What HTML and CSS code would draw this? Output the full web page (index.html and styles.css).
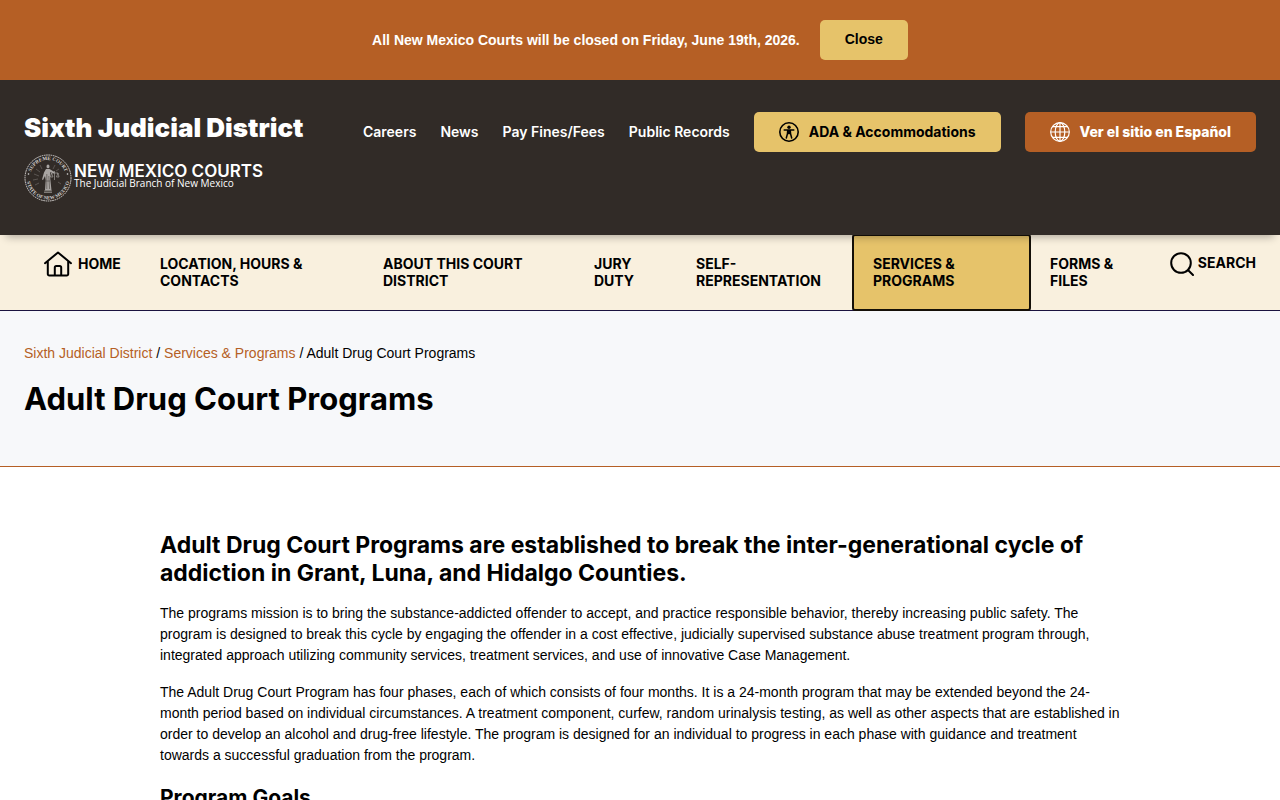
FILE: index.html
```html
<!DOCTYPE html>
<html lang="en">
<head>
  <meta charset="UTF-8" />
  <title>Adult Drug Court Programs | Sixth Judicial District</title>
  <meta name="viewport" content="width=device-width, initial-scale=1" />
  <link rel="stylesheet" href="styles.css">
</head>
<body>

  <div class="alert">
    <p>All New Mexico Courts will be closed on Friday, June 19th, 2026.</p>
    <button type="button" class="alert-close">Close</button>
  </div>

  <header class="header">
    <div class="brand">
      <a href="#" class="site-name">Sixth Judicial District</a>
      <a href="#" class="logo">
        <svg class="seal" viewBox="0 0 48 48" aria-hidden="true">
          <defs>
            <path id="arcTop" d="M6 24a18 18 0 0 1 36 0" />
            <path id="arcBottom" d="M2.500 24a21.500 21.500 0 0 0 43 0" />
          </defs>
          <circle cx="24" cy="24" r="23" class="ring" stroke-dasharray="1.6 .7" />
          <text class="seal-text"><textPath href="#arcTop" startOffset="50%" text-anchor="middle">SUPREME COURT</textPath></text>
          <text class="seal-text"><textPath href="#arcBottom" startOffset="50%" text-anchor="middle">STATE OF NEW MEXICO</textPath></text>
          <circle cx="4.500" cy="20" r=".8" fill="#ddd" />
          <circle cx="43.500" cy="20" r=".8" fill="#ddd" />
          <path class="rays" d="M16 11l2 4M12 15l4 3M10 20l5 2M9 26l5-1M31 11l-2 4M35 15l-3 2M11 31l4-2M37 30l-3-2" />
          <path class="figure" d="M24 10.500a1.500 1.900 0 1 1 0 3.800a1.500 1.900 0 0 1 0-3.800zM22 15h3.500l5 3-.6 1.200-3.800-1 .2 6.800 1.200 11.500h-6.500l.7-10.500-.7-4-2 4-1-.6 2-7z" />
          <path class="folds" d="M22.800 20v15M24.800 22l.8 13M21 27h5" />
          <path class="rays bright" d="M30.500 17v9M27.500 19h6.500M27.500 19l-1 4h2.500zM34 19l-1.500 4H35z" />
          <path class="rays bright" d="M20 37h8M20 38.500h8" />
        </svg>
        <span class="logo-text">
          <span class="logo-title">NEW MEXICO COURTS</span>
          <span class="logo-tagline">The Judicial Branch of New Mexico</span>
        </span>
      </a>
    </div>

    <div class="top-links">
      <a href="#">Careers</a>
      <a href="#">News</a>
      <a href="#">Pay Fines/Fees</a>
      <a href="#">Public Records</a>
      <a href="#" class="btn btn-gold">
        <svg class="btn-icon" viewBox="0 0 20 20" aria-hidden="true">
          <circle cx="10" cy="10" r="9.200" fill="none" stroke="currentColor" stroke-width="1.600" />
          <circle cx="10" cy="5.200" r="1.700" fill="currentColor" />
          <path d="M5.200 8h9.600M8.700 8.500L8.400 12 7.300 16M11.300 8.500l.3 3.500 1.100 4" fill="none" stroke="currentColor" stroke-width="1.500" stroke-linecap="round" stroke-linejoin="round" />
          <path d="M8.200 8h3.600v4.200H8.200z" fill="currentColor" />
        </svg>
        ADA &amp; Accommodations
      </a>
      <a href="#" class="btn btn-rust">
        <svg class="btn-icon" viewBox="0 0 20 20" aria-hidden="true">
          <g fill="none" stroke="currentColor" stroke-width="1.200">
            <circle cx="10" cy="10" r="9.300" />
            <ellipse cx="10" cy="10" rx="4.800" ry="9.300" />
            <path d="M10 .7v18.600M.7 10h18.600M2.500 4.700h15M2.500 15.300h15" />
          </g>
        </svg>
        Ver el sitio en Español
      </a>
    </div>
  </header>

  <nav class="nav">
    <a href="#" class="nav-home">
      <svg class="home-icon" viewBox="0 0 28 26" aria-hidden="true">
        <path d="M1 12.200L14 1.500l13 10.700M3.800 10.300V23a1.500 1.500 0 0 0 1.500 1.500h17.400a1.500 1.500 0 0 0 1.500-1.500V10.300M10.800 24.500v-8a1.500 1.500 0 0 1 1.500-1.500h3.400a1.500 1.500 0 0 1 1.500 1.500v8" />
      </svg>
      Home
    </a>
    <a href="#">Location, Hours &amp; Contacts</a>
    <a href="#">About this Court District</a>
    <a href="#">Jury Duty</a>
    <a href="#">Self-Representation</a>
    <a href="#" class="active">Services &amp; Programs</a>
    <a href="#">Forms &amp; Files</a>
    <button type="button" class="nav-search">
      <svg class="search-icon" viewBox="0 0 24 24" aria-hidden="true">
        <circle cx="11" cy="11" r="9.800" />
        <path d="M18.200 18.200l4.800 4.800" />
      </svg>
      Search
    </button>
  </nav>

  <section class="page-title">
    <div class="breadcrumb">
      <a href="#">Sixth Judicial District</a> / <a href="#">Services &amp; Programs</a> / <span>Adult Drug Court Programs</span>
    </div>
    <h1>Adult Drug Court Programs</h1>
  </section>

  <main class="content">
    <h2>Adult Drug Court Programs are established to break the inter-generational cycle of addiction in Grant, Luna, and Hidalgo Counties.</h2>
    <p>The programs mission is to bring the substance-addicted offender to accept, and practice responsible behavior, thereby increasing public safety. The program is designed to break this cycle by engaging the offender in a cost effective, judicially supervised substance abuse treatment program through, integrated approach utilizing community services, treatment services, and use of innovative Case Management.</p>
    <p>The Adult Drug Court Program has four phases, each of which consists of four months. It is a 24-month program that may be extended beyond the 24-month period based on individual circumstances. A treatment component, curfew, random urinalysis testing, as well as other aspects that are established in order to develop an alcohol and drug-free lifestyle. The program is designed for an individual to progress in each phase with guidance and treatment towards a successful graduation from the program.</p>
    <h3>Program Goals</h3>
  </main>

</body>
</html>
```
FILE: styles.css
```css
* {
  box-sizing: border-box;
}

html {
  scrollbar-width: none;
}

body {
  margin: 0;
  font-family: "Liberation Sans", Arial, sans-serif;
  font-size: 14px;
  line-height: 21px;
  color: #000;
  background-color: #fff;
}

a {
  color: inherit;
  text-decoration: none;
}

button {
  border: none;
  color: #000;
  cursor: pointer;
}

h1, h2, h3, p {
  margin: 0;
}

.alert {
  display: flex;
  justify-content: center;
  align-items: center;
  gap: 20px;
  padding: 20px 24px;
  background-color: #b55f25;
  color: #fff;
  font-weight: bold;
}

.alert-close {
  height: 40px;
  padding: 0 25px 2px;
  border-radius: 5px;
  background-color: #e6c36a;
  font: bold 14px "Liberation Sans", Arial, sans-serif;
}

/* header */
.header {
  position: relative;
  display: flex;
  justify-content: space-between;
  align-items: flex-start;
  padding: 32px 24px;
  background-color: #312b27;
  color: #fff;
  box-shadow: 0 8px 8px -6px rgba(0, 0, 0, 0.3);
}

.site-name {
  display: block;
  font: 900 26px/32px Inter, sans-serif;
}

.logo {
  display: flex;
  align-items: center;
  gap: 2px;
  margin: 10px 0 1px;
}

.seal {
  width: 48px;
  height: 48px;
}

.ring {
  fill: none;
  stroke: #d5d2d0;
  stroke-width: 1;
}

.seal-text {
  font: bold 5px "Liberation Serif", serif;
  fill: #d5d2d0;
}

.figure {
  fill: #a9a5a2;
}

.folds {
  fill: none;
  stroke: #4a4440;
  stroke-width: 0.6;
}

.rays {
  fill: none;
  stroke: #77726e;
  stroke-width: 0.6;
}

.bright {
  stroke: #b5b1ae;
}

.logo-text {
  display: flex;
  flex-direction: column;
  padding-bottom: 4px;
}

.logo-title {
  font: 600 17px/14px Inter, sans-serif;
}

.logo-tagline {
  font: 500 10px/10px "Open Sans", sans-serif;
}

.top-links {
  display: flex;
  align-items: center;
  gap: 24px;
  font: 600 14px/20px Inter, sans-serif;
}

.btn {
  display: flex;
  align-items: center;
  gap: 10px;
  height: 40px;
  padding: 0 25px;
  border-radius: 5px;
  font-weight: 700;
}

.btn-gold {
  background-color: #e6c36a;
  color: #000;
}

.btn-rust {
  background-color: #b55f25;
  font-weight: 800;
}

.btn-icon {
  width: 20px;
  height: 20px;
}

/* main menu */
.nav {
  display: grid;
  grid-template-columns: 116fr 223fr 211fr 102fr 177fr 177fr 121fr 105fr;
  padding: 0 24px;
  background-color: #f9f0de;
  border-bottom: 1px solid #1b1340;
}

.nav a, .nav-search {
  padding: 20px;
  font: 700 14px/17px Inter, sans-serif;
  text-transform: uppercase;
}

.nav a {
  min-height: 75px;
}

.nav .active {
  background-color: #e6c36a;
  border-radius: 2px;
  outline: 2px solid #151008;
  outline-offset: -1px;
}

.nav .nav-home {
  display: flex;
  align-items: flex-start;
  gap: 6px;
  padding-right: 0;
}

.home-icon, .search-icon {
  flex: none;
  fill: none;
  stroke: #000;
  stroke-width: 2;
  stroke-linecap: round;
  stroke-linejoin: round;
}

.home-icon {
  width: 28px;
  height: 26px;
  margin-top: -4px;
}

.nav .nav-search {
  display: flex;
  justify-content: flex-end;
  align-items: flex-start;
  gap: 4px;
  padding: 19px 0;
  background: none;
}

.search-icon {
  width: 24px;
  height: 24px;
  margin-top: -2px;
}

.page-title {
  padding: 32px 24px 48px;
  background-color: #f7f8fa;
  border-bottom: 1px solid #b55f25;
}

.breadcrumb a {
  color: #b55f25;
}

h1 {
  margin-top: 16px;
  font: 700 31px/38px Inter, sans-serif;
}

/* content */
.content {
  max-width: 1008px;
  margin: 0 auto;
  padding: 64px 24px;
}

h2, h3 {
  font-family: Inter, sans-serif;
  font-weight: 700;
  line-height: 28px;
}

h2 {
  font-size: 23px;
}

h3 {
  margin-top: 18px;
  font-size: 21px;
}

.content p {
  margin: 16px 0;
}
```
